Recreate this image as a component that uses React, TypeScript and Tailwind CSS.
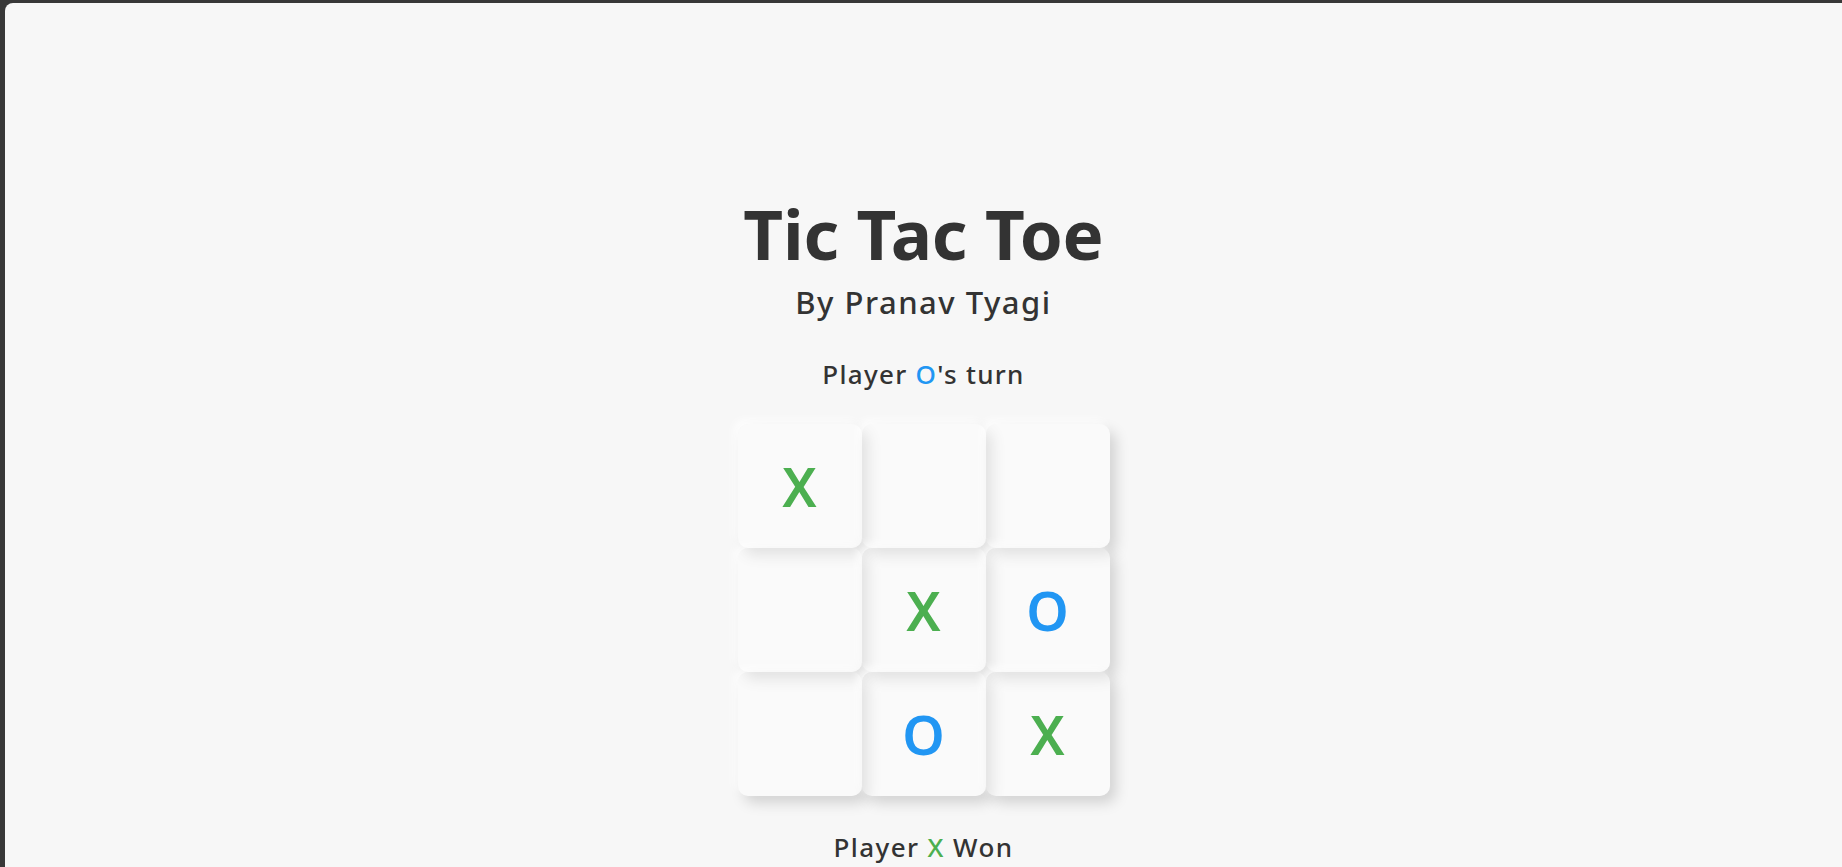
import React from 'react'

type Mark = 'X' | 'O' | null

const board: Mark[] = ['X', null, null, null, 'X', 'O', null, 'O', 'X']

function Cell({ value }: { value: Mark }) {
  return (
    <div className="w-[124px] h-[124px] rounded-[10px] bg-[rgba(255,255,255,0.35)] shadow-[6px_7px_14px_rgba(0,0,0,0.15),-4px_-4px_10px_rgba(255,255,255,0.9)] flex items-center justify-center">
      {value && (
        <span
          className={`text-[54px] font-semibold leading-none ${
            value === 'X' ? 'text-[#4caf50]' : 'text-[#2196f3]'
          }`}
        >
          {value}
        </span>
      )}
    </div>
  )
}

export default function App() {
  return (
    <div className="min-h-screen w-full bg-[#383838] pt-[3px] pl-[5px] overflow-hidden">
      <div
        className="h-[864px] rounded-tl-[8px] bg-[#f7f7f7] flex flex-col items-center text-[#333333]"
        style={{ fontFamily: '"Noto Sans", sans-serif' }}
      >
        <h1 className="mt-[196px] text-[69px] font-bold leading-none tracking-[-0.2px]">Tic Tac Toe</h1>
        <h2 className="mt-[19px] text-[31px] font-medium leading-none tracking-[1.5px]">By Pranav Tyagi</h2>
        <p className="mt-[43px] text-[26px] font-medium leading-none tracking-[1.3px]">
          Player <span className="text-[#2196f3]">O</span>'s turn
        </p>
        <div className="mt-[37px] grid grid-cols-3">
          {board.map((v, i) => (
            <Cell key={i} value={v} />
          ))}
        </div>
        <p className="mt-[38px] text-[26px] font-medium leading-none tracking-[1.4px]">
          Player <span className="text-[#4caf50]">X</span> Won
        </p>
      </div>
    </div>
  )
}
